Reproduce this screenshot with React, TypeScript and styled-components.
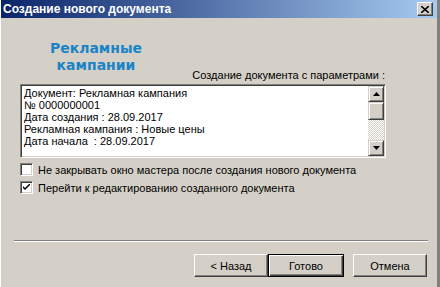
import React from 'react';
import styled, { createGlobalStyle } from 'styled-components';

const face = '#d4d0c8';
const shadow = '#808080';
const darkShadow = '#404040';

const GlobalStyle = createGlobalStyle`
  html, body {
    margin: 0;
    padding: 0;
    background: ${face};
  }
  body {
    font-family: "Liberation Sans", Arial, sans-serif;
    font-size: 11px;
    color: #000;
  }
`;

const infoLines = [
  'Документ: Рекламная кампания',
  '№ 0000000001',
  'Дата создания : 28.09.2017',
  'Рекламная кампания : Новые цены',
  'Дата начала  : 28.09.2017',
];

const Window = styled.div`
  width: 440px;
  height: 287px;
  box-sizing: border-box;
  display: flex;
  flex-direction: column;
  background: ${face};
  border-left: 1px solid #ffffff;
  border-right: 3px solid ${shadow};
  overflow: hidden;
`;

const TitleBar = styled.div`
  height: 18px;
  display: flex;
  align-items: center;
  justify-content: space-between;
  padding: 0 4px 0 2px;
  background: linear-gradient(to right, #0a246a, #a6caf0);
`;

const Title = styled.span`
  color: #fff;
  font-weight: bold;
  font-size: 12px;
  white-space: nowrap;
`;

const CloseButton = styled.div`
  width: 16px;
  height: 14px;
  box-sizing: border-box;
  display: flex;
  align-items: center;
  justify-content: center;
  background: ${face};
  border-top: 1px solid #fff;
  border-left: 1px solid #fff;
  border-right: 1px solid ${darkShadow};
  border-bottom: 1px solid ${darkShadow};
  box-shadow: inset -1px -1px 0 ${shadow};
`;

const Body = styled.div`
  flex: 1;
  display: flex;
  flex-direction: column;
  padding: 0 10px 0 19px;
`;

const TopRow = styled.div`
  width: 366px;
  height: 66px;
  display: flex;
  align-items: flex-end;
  justify-content: space-between;
`;

const Heading = styled.div`
  align-self: flex-start;
  margin-top: 22px;
  width: 152px;
  text-align: center;
  color: #1a84c6;
  font-family: "DejaVu Sans", Verdana, sans-serif;
  font-weight: bold;
  font-size: 14px;
  line-height: 17px;
`;

const Caption = styled.span`
  margin: 0 1px 3px 0;
  white-space: nowrap;
`;

const ListBox = styled.div`
  height: 74px;
  width: 366px;
  box-sizing: border-box;
  display: flex;
  border-top: 1px solid ${shadow};
  border-left: 1px solid ${shadow};
  border-right: 1px solid #fff;
  border-bottom: 1px solid #fff;
  box-shadow: inset 1px 1px 0 ${darkShadow}, inset -1px -1px 0 ${face};
  padding: 1px;
`;

const ListText = styled.div`
  flex: 1;
  background: #fff;
  padding: 1px 0 0 2px;
  line-height: 12px;
  overflow: hidden;
  white-space: pre;
`;

const ScrollBar = styled.div`
  width: 16px;
  display: flex;
  flex-direction: column;
`;

const ScrollButton = styled.div<{ $h: number }>`
  height: ${(p) => p.$h}px;
  box-sizing: border-box;
  display: flex;
  align-items: center;
  justify-content: center;
  background: ${face};
  border-top: 1px solid ${face};
  border-left: 1px solid ${face};
  border-right: 1px solid ${darkShadow};
  border-bottom: 1px solid ${darkShadow};
  box-shadow: inset 1px 1px 0 #fff, inset -1px -1px 0 ${shadow};
`;

const Track = styled.div`
  flex: 1;
  background-color: #fff;
  background-image: repeating-conic-gradient(${face} 0 25%, #fff 0 50%);
  background-size: 2px 2px;
`;

const Options = styled.div`
  margin-top: 5px;
  display: flex;
  flex-direction: column;
  gap: 5px;
`;

const OptionRow = styled.label`
  display: flex;
  align-items: center;
  gap: 5px;
  height: 13px;
  white-space: nowrap;
`;

const CheckBox = styled.span`
  width: 13px;
  height: 13px;
  box-sizing: border-box;
  display: flex;
  align-items: center;
  justify-content: center;
  background: #fff;
  border-top: 1px solid ${shadow};
  border-left: 1px solid ${shadow};
  border-right: 1px solid #fff;
  border-bottom: 1px solid #fff;
  box-shadow: inset 1px 1px 0 ${darkShadow}, inset -1px -1px 0 ${face};
`;

const Separator = styled.div`
  margin: 46px 0 0 -6px;
  width: 414px;
  height: 1px;
  background: ${shadow};
  border-bottom: 1px solid #fff;
`;

const ButtonRow = styled.div`
  margin-top: 12px;
  display: flex;
  justify-content: flex-end;
`;

const Button = styled.button<{ $default?: boolean; $gap?: number }>`
  width: ${(p) => (p.$default ? 76 : 74)}px;
  height: 23px;
  margin-left: ${(p) => p.$gap ?? 0}px;
  padding: 0;
  font-family: "Liberation Sans", Arial, sans-serif;
  font-size: 11px;
  color: #000;
  background: ${face};
  border-top: 1px solid #fff;
  border-left: 1px solid #fff;
  border-right: 1px solid ${darkShadow};
  border-bottom: 1px solid ${darkShadow};
  box-shadow: inset -1px -1px 0 ${shadow};
  outline: none;
  ${(p) =>
    p.$default &&
    `
    border: 1px solid #000;
    box-shadow: inset 1px 1px 0 #fff, inset -1px -1px 0 ${darkShadow}, inset -2px -2px 0 ${shadow};
  `}
`;

const Arrow = ({ up }: { up?: boolean }) => (
  <svg width="7" height="4" viewBox="0 0 7 4">
    <polygon points={up ? '3.5,0 7,4 0,4' : '0,0 7,0 3.5,4'} fill="#000" />
  </svg>
);

const Tick = () => (
  <svg width="7" height="7" viewBox="0 0 7 7">
    <path d="M0 2 L0 4 L2 6 L7 1 L7 -1 L2 4 Z" fill="#000" />
  </svg>
);

const App = () => {
  return (
    <>
      <GlobalStyle />
      <Window>
        <TitleBar>
          <Title>Создание нового документа</Title>
          <CloseButton>
            <svg width="8" height="7" viewBox="0 0 8 7">
              <path d="M0 0 L8 7 M8 0 L0 7" stroke="#000" strokeWidth="1.6" />
            </svg>
          </CloseButton>
        </TitleBar>
        <Body>
          <TopRow>
            <Heading>
              Рекламные
              <br />
              кампании
            </Heading>
            <Caption>Создание документа с параметрами :</Caption>
          </TopRow>
          <ListBox>
            <ListText>
              {infoLines.map((line, index) => (
                <div key={`line-${index}`}>{line}</div>
              ))}
            </ListText>
            <ScrollBar>
              <ScrollButton $h={16}>
                <Arrow up />
              </ScrollButton>
              <ScrollButton $h={18} />
              <Track />
              <ScrollButton $h={16}>
                <Arrow />
              </ScrollButton>
            </ScrollBar>
          </ListBox>
          <Options>
            <OptionRow>
              <CheckBox />
              Не закрывать окно мастера после создания нового документа
            </OptionRow>
            <OptionRow>
              <CheckBox>
                <Tick />
              </CheckBox>
              Перейти к редактированию созданного документа
            </OptionRow>
          </Options>
          <Separator />
          <ButtonRow>
            <Button>&lt; Назад</Button>
            <Button $default>Готово</Button>
            <Button $gap={9}>Отмена</Button>
          </ButtonRow>
        </Body>
      </Window>
    </>
  );
};

export default App;
